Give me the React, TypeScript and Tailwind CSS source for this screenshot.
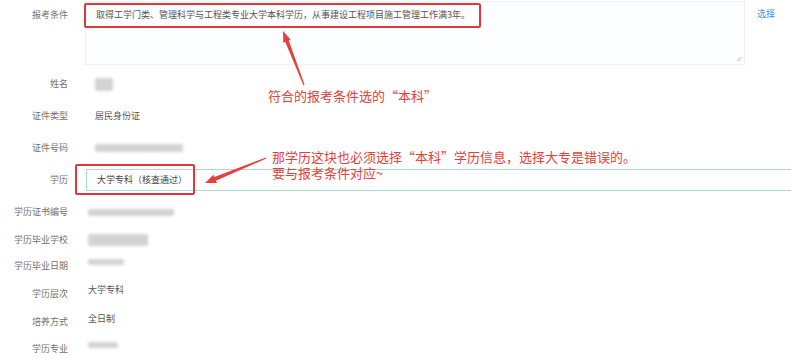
import React from "react";

const FONT = '"Noto Sans CJK SC", "Noto Sans", "Liberation Sans", sans-serif';

function arrowPoints(tx: number, ty: number, hx: number, hy: number, tailW: number, shaftW: number, headL: number, headW: number) {
  const dx = hx - tx;
  const dy = hy - ty;
  const len = Math.hypot(dx, dy);
  const ux = dx / len;
  const uy = dy / len;
  const nx = -uy;
  const ny = ux;
  const bx = hx - ux * headL;
  const by = hy - uy * headL;
  const pts: [number, number][] = [
    [tx + nx * tailW, ty + ny * tailW],
    [bx + nx * shaftW, by + ny * shaftW],
    [bx + nx * headW, by + ny * headW],
    [hx, hy],
    [bx - nx * headW, by - ny * headW],
    [bx - nx * shaftW, by - ny * shaftW],
    [tx - nx * tailW, ty - ny * tailW],
  ];
  return pts.map((p) => `${p[0].toFixed(1)},${p[1].toFixed(1)}`).join(" ");
}

function Label({ children }: { children: React.ReactNode }) {
  return <div className="w-[68px] shrink-0 text-right text-[9px] text-[#707070]">{children}</div>;
}

function Blur({ w, h }: { w: number; h: number }) {
  return <div className="rounded-[2px] bg-[#d3d3d3] blur-[1.5px]" style={{ width: w, height: h }} />;
}

export default function App() {
  return (
    <div className="relative h-[362px] w-[791px] overflow-hidden bg-white" style={{ fontFamily: FONT }}>
      <div className="flex flex-col">
        {/* 报考条件 */}
        <div className="flex h-[68px] items-start">
          <div className="pt-[8px]">
            <Label>报考条件</Label>
          </div>
          <div className="relative ml-[17px] mt-[1px] h-[64px] w-[660px] border border-[#edf2f5] bg-[#fbfdff]">
            <div className="pl-[10px] pt-[6px] text-[9px] leading-[14px] text-[#555]">
              取得工学门类、管理科学与工程类专业大学本科学历，从事建设工程项目施工管理工作满3年。
            </div>
            <svg className="absolute bottom-[2px] right-[2px]" width="6" height="6" viewBox="0 0 6 6">
              <path d="M1 5 L5 1 M3.5 5 L5 3.5" stroke="#aaa" strokeWidth="0.8" />
            </svg>
          </div>
          <div className="ml-[12px] pt-[7px] text-[9px] text-[#3a8ee6]">选择</div>
        </div>

        {/* 姓名 */}
        <div className="flex h-[32px] items-center">
          <Label>姓名</Label>
          <div className="ml-[27px]">
            <Blur w={18} h={13} />
          </div>
        </div>

        {/* 证件类型 */}
        <div className="flex h-[32px] items-center">
          <Label>证件类型</Label>
          <div className="ml-[27px] text-[9px] text-[#555]">居民身份证</div>
        </div>

        {/* 证件号码 */}
        <div className="flex h-[32px] items-center">
          <Label>证件号码</Label>
          <div className="ml-[27px]">
            <Blur w={88} h={8} />
          </div>
        </div>

        {/* 学历 */}
        <div className="flex h-[32px] items-center">
          <Label>学历</Label>
          <div className="ml-[18px] flex h-[22px] flex-1 items-center border-y border-l border-[#a9dccf] pl-[10px] text-[9px] text-[#444]">
            大学专科（核查通过）
          </div>
        </div>

        {/* 学历证书编号 */}
        <div className="flex h-[32px] items-center">
          <Label>学历证书编号</Label>
          <div className="ml-[20px]">
            <Blur w={86} h={7} />
          </div>
        </div>

        {/* 学历毕业学校 */}
        <div className="flex h-[24px] items-center">
          <Label>学历毕业学校</Label>
          <div className="ml-[20px]">
            <Blur w={60} h={12} />
          </div>
        </div>

        {/* 学历毕业日期 */}
        <div className="flex h-[28px] items-center">
          <Label>学历毕业日期</Label>
          <div className="mb-[8px] ml-[20px]">
            <Blur w={36} h={6} />
          </div>
        </div>

        {/* 学历层次 */}
        <div className="flex h-[28px] items-center">
          <Label>学历层次</Label>
          <div className="mb-[8px] ml-[20px] text-[9px] text-[#555]">大学专科</div>
        </div>

        {/* 培养方式 */}
        <div className="flex h-[28px] items-center">
          <Label>培养方式</Label>
          <div className="mb-[6px] ml-[20px] text-[9px] text-[#555]">全日制</div>
        </div>

        {/* 学历专业 */}
        <div className="flex h-[26px] items-center">
          <Label>学历专业</Label>
          <div className="mb-[8px] ml-[20px]">
            <Blur w={30} h={6} />
          </div>
        </div>
      </div>

      {/* annotations */}
      <div className="pointer-events-none absolute left-[84px] top-[3px] h-[25px] w-[397px] rounded-[2px] border-2 border-[#e0383a]" />
      <div className="pointer-events-none absolute left-[75px] top-[164px] h-[31px] w-[120px] rounded-[2px] border-2 border-[#e0383a]" />

      <div className="pointer-events-none absolute left-[268px] top-[87px] text-[13px] leading-[18px] text-[#e5403a]">
        符合的报考条件选的“本科”
      </div>
      <div className="pointer-events-none absolute left-[272px] top-[149px] text-[13px] leading-[16px] text-[#e5403a]">
        <div>那学历这块也必须选择“本科”学历信息，选择大专是错误的。</div>
        <div>要与报考条件对应~</div>
      </div>

      <svg className="pointer-events-none absolute left-0 top-0" width="791" height="362" viewBox="0 0 791 362">
        <polygon points={arrowPoints(304, 85, 283, 31, 0.6, 1.8, 11, 4)} fill="#e5403a" />
        <polygon points={arrowPoints(266, 158, 205, 183, 0.6, 2, 11, 4.5)} fill="#e5403a" />
      </svg>
    </div>
  );
}
